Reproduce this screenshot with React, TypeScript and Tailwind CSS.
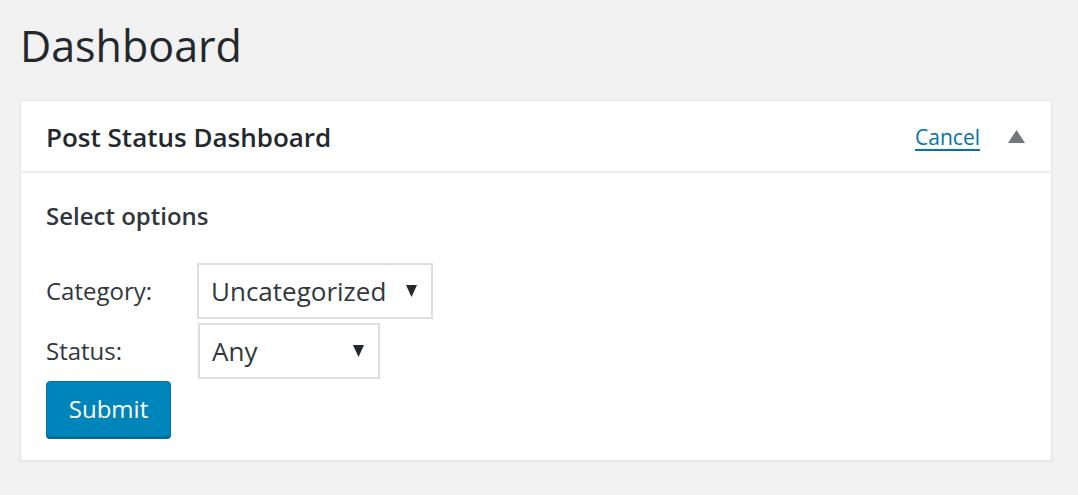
const font = { fontFamily: '"Open Sans", "Noto Sans", sans-serif' }

function Caret() {
  return (
    <svg width="11" height="12" viewBox="0 0 11 12" className="shrink-0">
      <path d="M0 0 H11 L5.5 12 Z" fill="#23282d" />
    </svg>
  )
}

function FakeSelect({ value, width }: { value: string; width: string }) {
  return (
    <div
      className={`${width} h-[56px] border-2 border-[#dddddd] bg-white flex items-center justify-between pl-[12px] pr-[14px]`}
    >
      <span className="text-[26px] text-[#32373c] leading-none">{value}</span>
      <Caret />
    </div>
  )
}

export default function App() {
  return (
    <div className="bg-[#f1f1f1] h-[495px] pl-[20px] pr-[26px] pt-[18px] overflow-hidden" style={font}>
      <h1 className="text-[43px] leading-[56px] text-[#23282d] font-normal">Dashboard</h1>

      <div className="mt-[26px] bg-white border border-[#e5e5e5] shadow-[0_1px_1px_rgba(0,0,0,0.04)]">
        <div className="h-[72px] border-b-2 border-[#eeeeee] flex items-center pl-[25px] pr-[26px] pt-[3px]">
          <h2 className="text-[26px] font-semibold text-[#23282d] flex-1">Post Status Dashboard</h2>
          <a href="#" className="text-[21px] text-[#0073aa] underline underline-offset-[4px] mr-[28px]">
            Cancel
          </a>
          <svg width="17" height="13" viewBox="0 0 17 13" className="-mt-[3px]">
            <path d="M8.5 0 L17 13 H0 Z" fill="#72777c" />
          </svg>
        </div>

        <div className="pl-[25px] pt-[26px] pb-[23px]">
          <p className="text-[24px] font-semibold text-[#32373c] leading-[34px]">Select options</p>

          <div className="mt-[30px] flex flex-col">
            <div className="flex items-center">
              <span className="w-[151px] text-[24px] text-[#32373c]">Category:</span>
              <FakeSelect value="Uncategorized" width="w-[236px]" />
            </div>
            <div className="flex items-center mt-[4px]">
              <span className="w-[152px] text-[24px] text-[#32373c]">Status:</span>
              <FakeSelect value="Any" width="w-[182px]" />
            </div>
            <div className="mt-[2px]">
              <button className="h-[56px] w-[125px] rounded-[4px] bg-[#0085ba] border border-[#0073aa] shadow-[0_2px_0_#006799] text-white text-[24px]">
                Submit
              </button>
            </div>
          </div>
        </div>
      </div>
    </div>
  )
}
